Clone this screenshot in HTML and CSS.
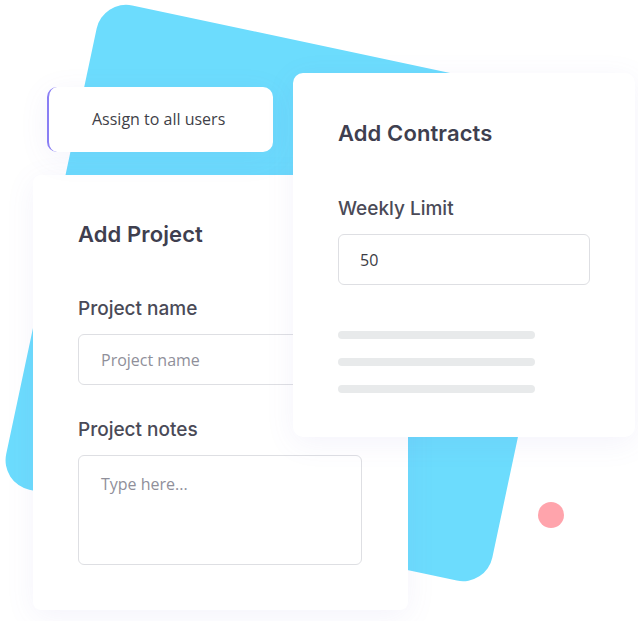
FILE: index.html
```html
<!DOCTYPE html>
<html>
<head>
<meta charset="utf-8">
<link rel="stylesheet" href="styles.css">
</head>
<body>
<div class="stage">
  <svg class="blob" width="638" height="621" viewBox="0 0 638 621">
    <rect x="46" y="45.5" width="497" height="495" rx="30" fill="#6cdcfd" transform="rotate(12 294.5 293)"/>
  </svg>
  <div class="dot"></div>

  <div class="card project">
    <h2 class="title">Add Project</h2>
    <label class="label first">Project name</label>
    <div class="field">Project name</div>
    <label class="label">Project notes</label>
    <div class="field area">Type here...</div>
  </div>

  <div class="assign">Assign to all users</div>

  <div class="card contracts">
    <h2 class="title">Add Contracts</h2>
    <label class="label first tight">Weekly Limit</label>
    <div class="field value">50</div>
    <div class="lines">
      <span class="line"></span>
      <span class="line"></span>
      <span class="line"></span>
    </div>
  </div>
</div>
</body>
</html>
```

FILE: styles.css
```css
html, body {
  margin: 0;
  padding: 0;
  background: #ffffff;
}

.stage {
  position: relative;
  width: 638px;
  height: 621px;
  overflow: hidden;
  font-family: "Inter", "Noto Sans", sans-serif;
}

.blob {
  position: absolute;
  left: 0;
  top: 0;
}

.dot {
  position: absolute;
  left: 538px;
  top: 502px;
  width: 26px;
  height: 26px;
  border-radius: 50%;
  background: #ffa4ac;
}

.card {
  position: absolute;
  box-sizing: border-box;
  background: #ffffff;
  display: flex;
  flex-direction: column;
  align-items: flex-start;
  box-shadow: 0 6px 30px rgba(110, 100, 210, 0.08);
}

.project {
  left: 33px;
  top: 175px;
  width: 375px;
  height: 435px;
  border-radius: 8px;
  padding: 47px 0 0 45px;
}

.contracts {
  left: 293px;
  top: 73px;
  width: 342px;
  height: 364px;
  border-radius: 10px;
  padding: 48px 0 0 45px;
}

.title {
  margin: 0;
  font-size: 22px;
  line-height: 24px;
  font-weight: 600;
  letter-spacing: 0.1px;
  color: #3f3f4f;
}

.label {
  display: block;
  margin-top: 34px;
  font-size: 19px;
  line-height: 22px;
  font-weight: 500;
  color: #4a4a57;
}

.label.first {
  margin-top: 52px;
}

.label.first.tight {
  margin-top: 53px;
}

.field {
  box-sizing: border-box;
  margin-top: 14px;
  width: 284px;
  height: 51px;
  border: 1px solid #dedfe3;
  border-radius: 6px;
  padding: 0 0 0 22px;
  display: flex;
  align-items: center;
  font-family: "Open Sans", "Noto Sans", sans-serif;
  font-size: 16px;
  color: #8f8f9a;
}

.field.area {
  height: 110px;
  align-items: flex-start;
  padding-top: 17px;
}

.field.value {
  width: 252px;
  padding-left: 21px;
  color: #3c3c44;
}

.lines {
  margin-top: 46px;
  display: flex;
  flex-direction: column;
  gap: 19px;
}

.line {
  display: block;
  width: 197px;
  height: 8px;
  border-radius: 4px;
  background: #e8eaeb;
}

.assign {
  position: absolute;
  left: 47px;
  top: 87px;
  box-sizing: border-box;
  width: 226px;
  height: 65px;
  border-radius: 10px;
  border-left: 2px solid #8a7ff4;
  background: #ffffff;
  box-shadow: 0 6px 30px rgba(110, 100, 210, 0.08);
  display: flex;
  align-items: center;
  padding-left: 43px;
  padding-bottom: 1px;
  font-family: "Open Sans", "Noto Sans", sans-serif;
  font-size: 16px;
  color: #3f3f48;
}
```
